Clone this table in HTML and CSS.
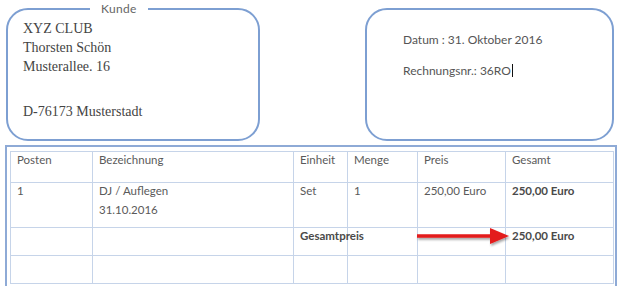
FILE: index.html
```html
<!DOCTYPE html>
<html lang="de">
<head>
<meta charset="utf-8">
<link rel="stylesheet" href="styles.css">
</head>
<body>
<div class="top">
  <div class="box customer">
    <span class="legend">Kunde</span>
    <div class="line">XYZ CLUB</div>
    <div class="line">Thorsten Schön</div>
    <div class="line">Musterallee. 16</div>
    <div class="line city">D-76173 Musterstadt</div>
  </div>
  <div class="box meta">
    <div class="mline">Datum : 31. Oktober 2016</div>
    <div class="mline second">Rechnungsnr.: 36RO<span class="caret"></span></div>
  </div>
</div>
<div class="frame">
  <table class="items">
    <colgroup>
      <col class="c1"><col class="c2"><col class="c3"><col class="c4"><col class="c5"><col class="c6">
    </colgroup>
    <tr class="head">
      <td>Posten</td><td>Bezeichnung</td><td>Einheit</td><td>Menge</td><td>Preis</td><td>Gesamt</td>
    </tr>
    <tr class="r1">
      <td>1</td><td>DJ / Auflegen<div class="sub">31.10.2016</div></td><td>Set</td><td>1</td><td>250,00 Euro</td><td class="b">250,00 Euro</td>
    </tr>
    <tr class="r2">
      <td></td><td></td><td class="b">Gesamtpreis</td><td></td><td></td><td class="b">250,00 Euro</td>
    </tr>
    <tr class="r3">
      <td></td><td></td><td></td><td></td><td></td><td></td>
    </tr>
  </table>
  <svg class="arrow" width="100" height="24" viewBox="0 0 100 24">
    <defs>
      <filter id="sh" x="-10%" y="-30%" width="130%" height="180%">
        <feDropShadow dx="1" dy="2" stdDeviation="1.2" flood-color="#000" flood-opacity="0.35"/>
      </filter>
    </defs>
    <g filter="url(#sh)">
      <path d="M3 10.2 H76 V4 L95 12 L76 20 V13.8 H3 Z" fill="#e31b1b"/>
    </g>
  </svg>
</div>
</body>
</html>
```
FILE: styles.css
```css
html, body {
  margin: 0;
  padding: 0;
  background: #ffffff;
}
body {
  width: 621px;
  height: 286px;
  overflow: hidden;
  font-family: "Lato", "Liberation Sans", sans-serif;
  color: #555;
}
.top {
  display: flex;
  padding: 8px 0 0 6px;
}
.box {
  box-sizing: border-box;
  height: 133px;
  border: 2px solid #7d9fd2;
  border-radius: 22px;
}
.customer {
  position: relative;
  width: 254px;
  padding: 9px 0 0 15px;
  font-family: "Liberation Serif", serif;
  font-size: 14px;
  color: #444;
}
.legend {
  position: absolute;
  top: -9px;
  left: 82px;
  padding: 0 11px 0 11px;
  background: #fff;
  font-family: "Lato", "Liberation Sans", sans-serif;
  font-size: 12px;
  line-height: 16px;
  color: #666;
  letter-spacing: 0.3px;
}
.line {
  line-height: 19px;
}
.city {
  margin-top: 26px;
}
.meta {
  margin-left: 105px;
  width: 249px;
  padding: 22px 0 0 36px;
  font-size: 12px;
  color: #555;
}
.mline {
  line-height: 16px;
}
.second {
  margin-top: 15px;
}
.caret {
  display: inline-block;
  width: 1.5px;
  height: 13px;
  background: #111;
  vertical-align: -2px;
  margin-left: 1px;
}
.frame {
  position: relative;
  box-sizing: border-box;
  margin: 4px 0 0 5px;
  width: 612px;
  height: 160px;
  padding: 4px 3px;
  border: 2px solid #8eaad6;
}
.items {
  border-collapse: collapse;
  table-layout: fixed;
  width: 603px;
  font-size: 11.5px;
  color: #5a5a5a;
}
.items td {
  border: 1px solid #c6d4e9;
  vertical-align: top;
  padding: 1px 6px 0 6px;
  line-height: 14px;
}
.sub {
  margin-top: 5px;
}
.c1 { width: 82px; }
.c2 { width: 201px; }
.c3 { width: 54px; }
.c4 { width: 70px; }
.c5 { width: 88px; }
.c6 { width: 108px; }
.head td { height: 29px; }
.r1 td { height: 43px; }
.r2 td { height: 26px; }
.r3 td { height: 26px; }
.items td.b {
  font-weight: bold;
  color: #4a4a4a;
}
.arrow {
  position: absolute;
  left: 407px;
  top: 77px;
}
```
